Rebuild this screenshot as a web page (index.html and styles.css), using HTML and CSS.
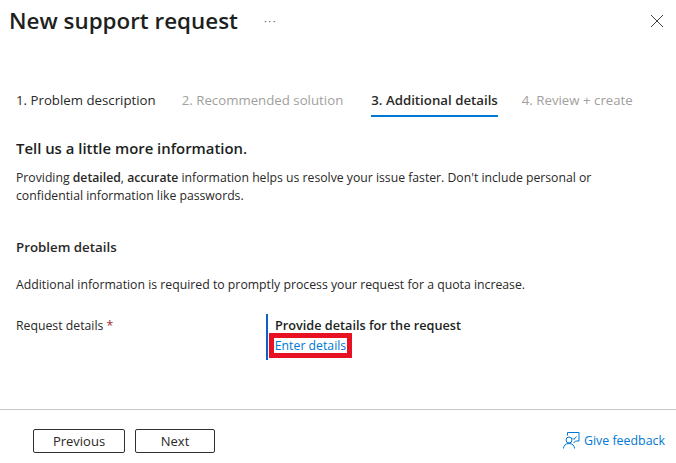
FILE: index.html
```html
<!DOCTYPE html>
<html lang="en">
<head>
<meta charset="utf-8">
<title>New support request</title>
<link rel="stylesheet" href="styles.css">
</head>
<body>
<div class="page">
  <header class="header">
    <h1 class="title">New support request</h1>
    <span class="more">···</span>
    <svg class="close" width="14" height="14" viewBox="0 0 14 14"><path d="M1 1l12 12M13 1L1 13" stroke="#444" stroke-width="1" fill="none"/></svg>
  </header>
  <nav class="tabs">
    <span class="tab tab-done">1. Problem description</span>
    <span class="tab tab-off">2. Recommended solution</span>
    <span class="tab tab-on">3. Additional details</span>
    <span class="tab tab-off">4. Review + create</span>
  </nav>
  <main class="content">
    <h2 class="lead">Tell us a little more information.</h2>
    <p class="intro">Providing <b>detailed</b>, <b>accurate</b> information helps us resolve your issue faster. Don't include personal or confidential information like passwords.</p>
    <h3 class="section">Problem details</h3>
    <p class="note">Additional information is required to promptly process your request for a quota increase.</p>
    <div class="field">
      <div class="label">Request details <span class="req">*</span></div>
      <div class="callout">
        <div class="callout-title">Provide details for the request</div>
        <a class="link boxed">Enter details</a>
      </div>
    </div>
  </main>
  <footer class="footer">
    <button class="btn btn-prev">Previous</button>
    <button class="btn btn-next">Next</button>
    <a class="feedback">
      <svg width="17" height="17" viewBox="0 0 17 17" fill="none" stroke="#0078d4" stroke-width="1"><path d="M4.5 3.5V.5h11.5v8.5h-3.5l-2 2"/><path d="M9.5 6l1.5 1.5 2.5-3"/><circle cx="6" cy="8" r="3"/><path d="M.5 16.500c0-3 2.200-5 5.500-5s5.500 2 5.500 5"/></svg>
      <span>Give feedback</span>
    </a>
  </footer>
</div>
</body>
</html>
```
FILE: styles.css
```css
* { box-sizing: border-box; }
html, body { margin: 0; padding: 0; background: #fff; }
body { font-family: "Open Sans", "Noto Sans", "Liberation Sans", sans-serif; font-size: 12.27px; color: #292827; }
.page { width: 676px; height: 463px; display: flex; flex-direction: column; overflow: hidden; }
.header { display: flex; align-items: center; height: 42px; padding: 0 12px 0 9px; }
.title { margin: 0; font-size: 22.4px; font-weight: 600; line-height: 42px; color: #201f1e; }
.more { margin: -2px 0 0 26px; font-size: 11px; letter-spacing: 1.500px; color: #605e5c; }
.close { margin-left: auto; }
.tabs { display: flex; gap: 26px; margin: 45px 0 0 16px; height: 30px; }
.tab { font-size: 13.25px; line-height: 26px; height: 30px; white-space: nowrap; }
.tab-done { color: #292827; }
.tab-off { color: #a19f9d; }
.tab-on { font-weight: 600; border-bottom: 2px solid #0078d4; margin: 0 -2px 0 2px; }
.content { padding: 0 16px; flex: 1; }
.lead { margin: 20px 0 0; font-size: 14.9px; font-weight: 600; line-height: 22px; color: #201f1e; }
.intro { margin: 10px 0 0; width: 600px; line-height: 18px; font-size: 12.22px; }
.intro b { font-weight: 600; }
.section { margin: 33px 0 0; font-size: 13.3px; font-weight: 600; line-height: 18px; }
.note { margin: 20px 0 0; line-height: 18px; }
.field { display: flex; margin-top: 20px; }
.label { width: 250px; line-height: 18px; padding-top: 3px; }
.req { color: #a4262c; }
.callout { border-left: 2px solid #0f5fc4; padding: 3px 0 0 7px; height: 46px; }
.callout-title { font-size: 12.7px; font-weight: 600; line-height: 16px; color: #201f1e; }
.link { color: #0078d4; }
.boxed { display: block; width: 73px; height: 15px; margin: 5px 0 0 -1px; line-height: 15px; outline: 5px solid #e81123; text-align: center; white-space: nowrap; }
.footer { display: flex; align-items: center; height: 54px; border-top: 1px solid #c8c6c4; padding: 8px 11px 0 33px; }
.btn { height: 24px; border: 1px solid #323130; border-radius: 2px; background: #fff; font: inherit; font-size: 13px; color: #292827; font-weight: 500; padding: 0; }
.btn-prev { width: 92px; }
.btn-next { width: 80px; margin-left: 10px; }
.feedback { margin-left: auto; display: flex; align-items: center; gap: 4px; font-size: 12.4px; color: #0078d4; }
```
